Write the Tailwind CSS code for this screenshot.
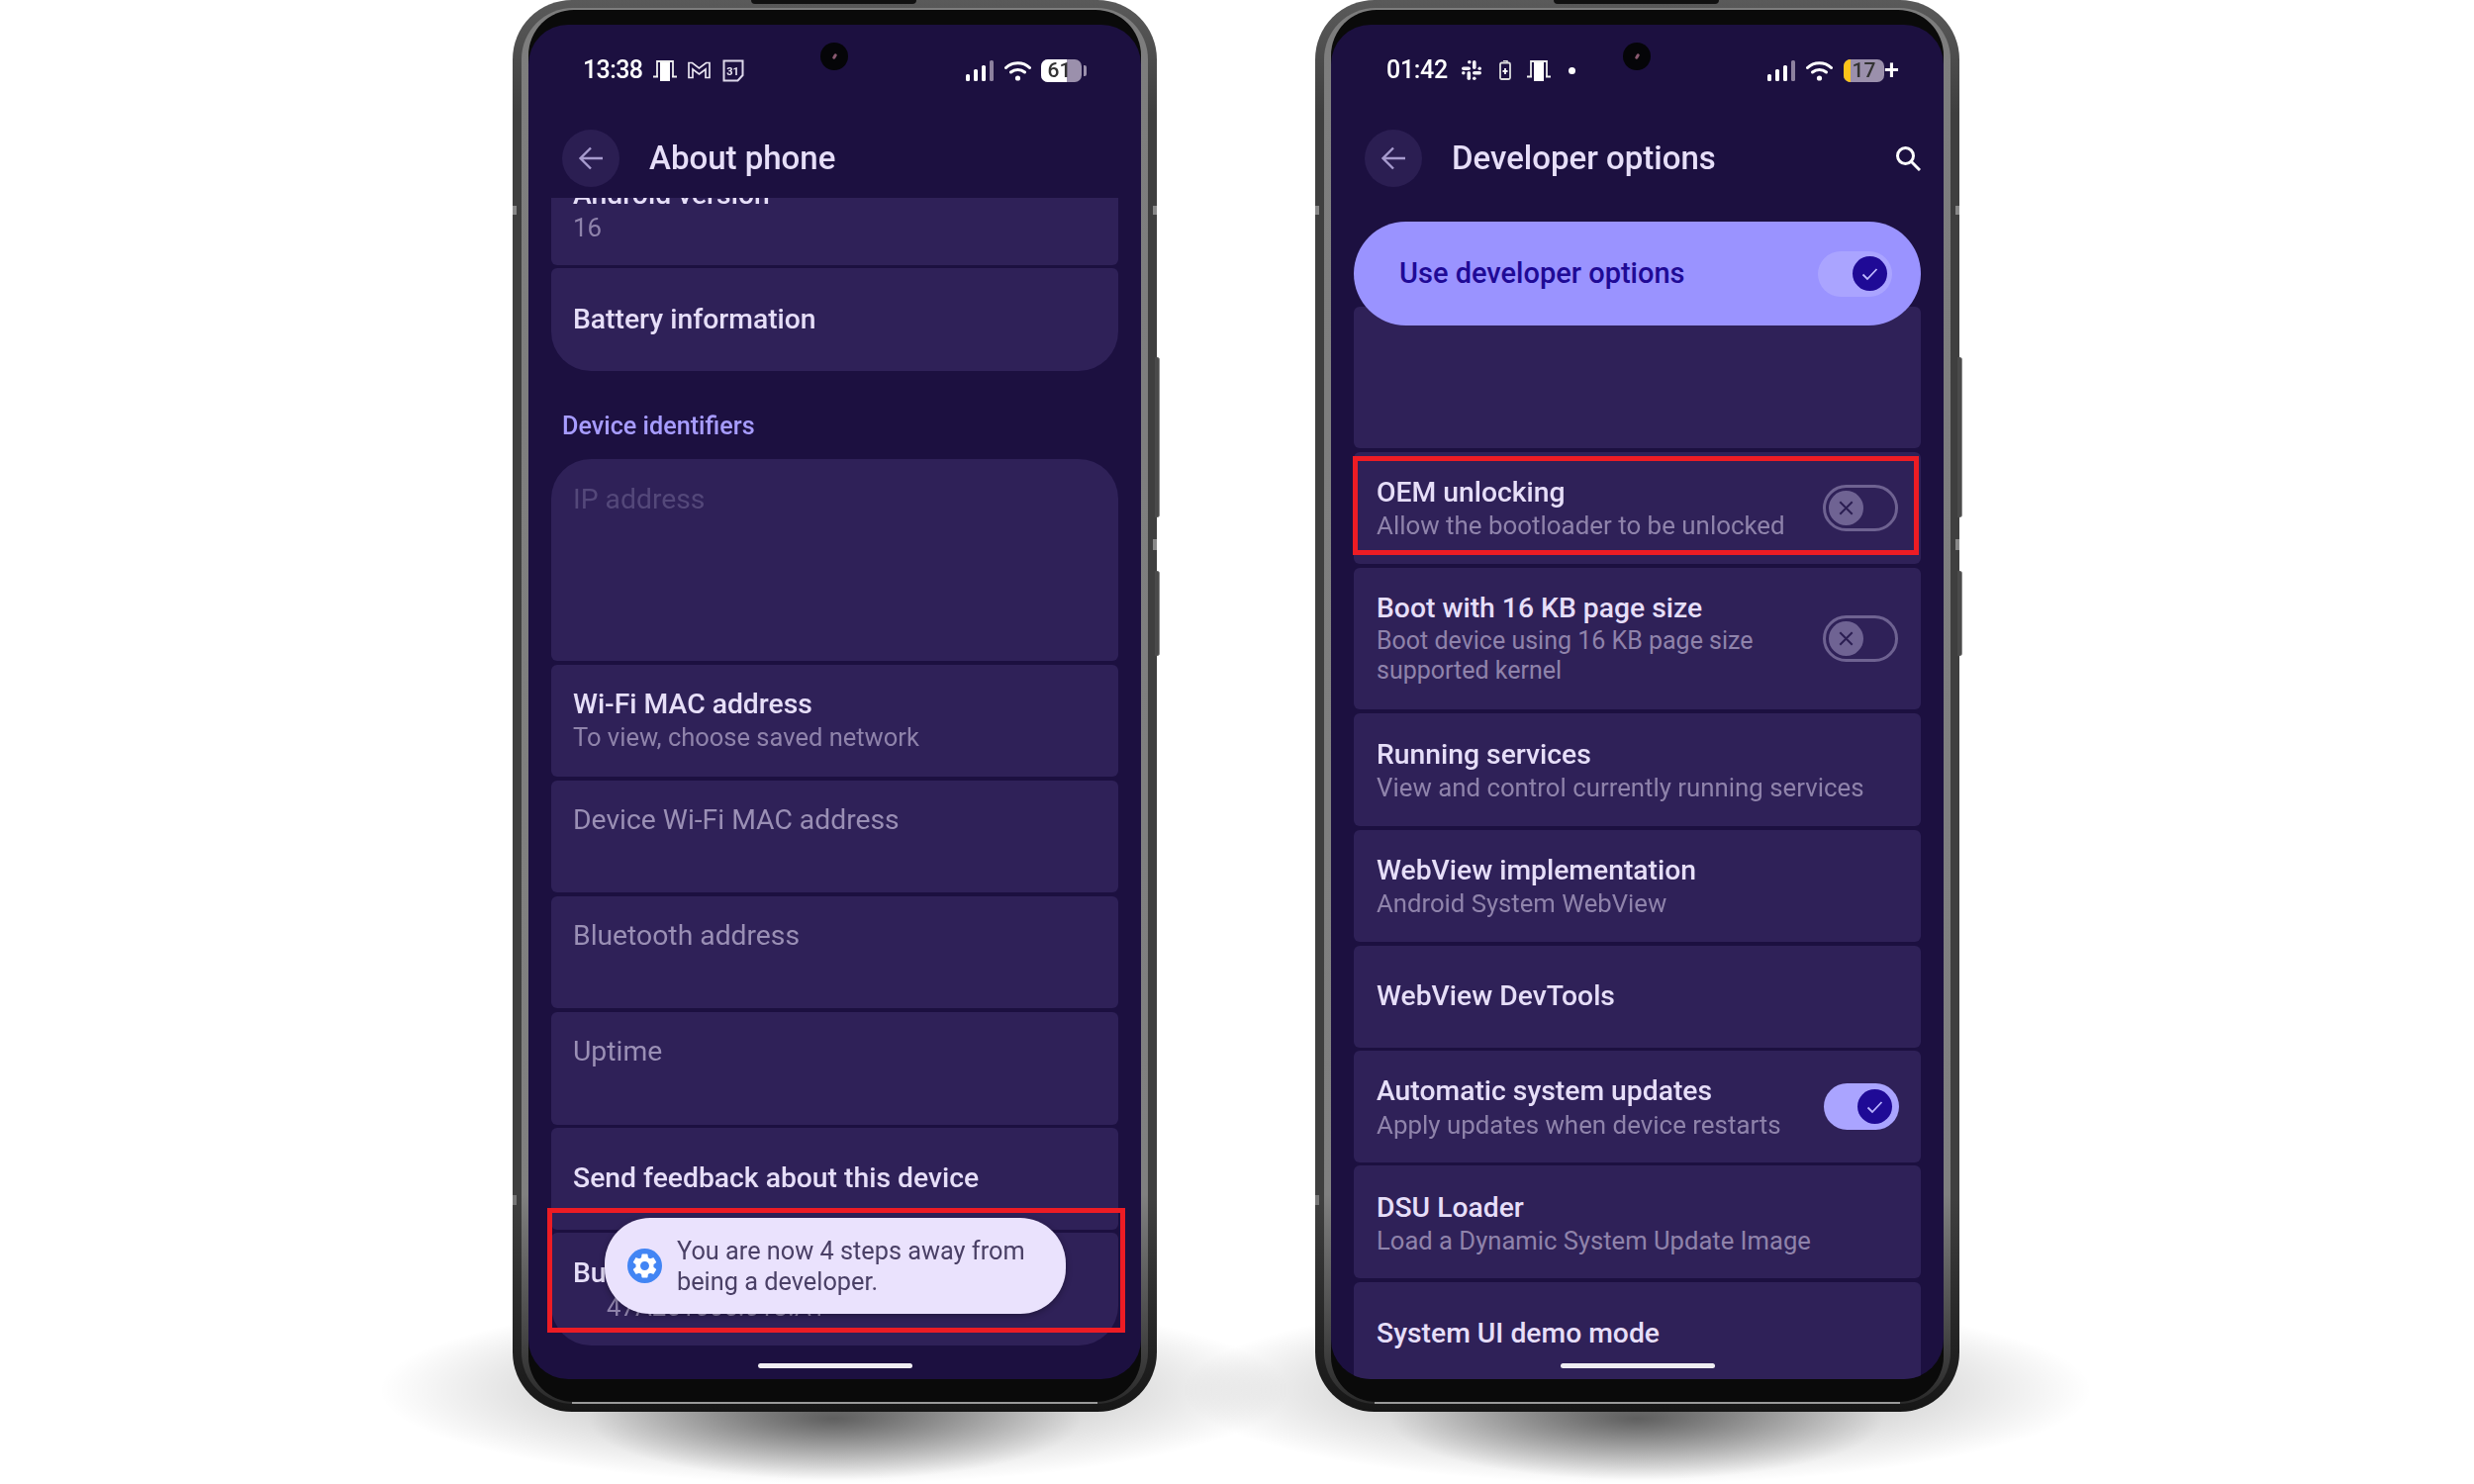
<!DOCTYPE html>
<html>
<head>
<meta charset="utf-8">
<script src="https://cdn.jsdelivr.net/npm/@tailwindcss/browser@4"></script>
</head>
<body class="bg-white">
<div class="relative w-[2500px] h-[1500px] overflow-hidden bg-white font-[family-name:Roboto,sans-serif]">
  <!-- shadows -->
  <div class="absolute left-[383px] top-[1310px] w-[920px] h-[190px] bg-[radial-gradient(closest-side,rgba(0,0,0,0.36),rgba(0,0,0,0))]"></div>
  <div class="absolute left-[593px] top-[1372px] w-[500px] h-[124px] bg-[radial-gradient(closest-side,rgba(0,0,0,0.5),rgba(0,0,0,0))]"></div>
  <div class="absolute left-[1194px] top-[1310px] w-[920px] h-[190px] bg-[radial-gradient(closest-side,rgba(0,0,0,0.36),rgba(0,0,0,0))]"></div>
  <div class="absolute left-[1404px] top-[1372px] w-[500px] h-[124px] bg-[radial-gradient(closest-side,rgba(0,0,0,0.5),rgba(0,0,0,0))]"></div>

  <div class="relative flex gap-[160px] pl-[518px] blur-[0.5px]">

    <!-- PHONE 1 -->
    <div class="relative w-[651px] h-[1427px] rounded-[60px] bg-[linear-gradient(#5a5a5a,#3f3f3f_8%,#3f3f3f_85%,#161616)] px-[9px] py-[8px] shrink-0">
      <div class="absolute right-[-3px] top-[361px] w-[5px] h-[162px] rounded-r-[3px] bg-[#4a4a4a] border-r border-[#888]"></div>
      <div class="absolute right-[-3px] top-[577px] w-[5px] h-[86px] rounded-r-[3px] bg-[#4a4a4a] border-r border-[#888]"></div>
      <div class="absolute right-0 top-[208px] w-[4px] h-[9px] bg-[#888]"></div>
      <div class="absolute right-0 top-[545px] w-[4px] h-[11px] bg-[#888]"></div>
      <div class="absolute left-0 top-[208px] w-[4px] h-[9px] bg-[#888]"></div>
      <div class="absolute left-0 top-[1208px] w-[4px] h-[10px] bg-[#777]"></div>
      <div class="absolute left-[241px] top-0 w-[167px] h-[4px] rounded-b-[4px] bg-[#111]"></div>
      <div class="h-[1411px] rounded-[52px] bg-[linear-gradient(#7d7d7d,#808080_85%,#2a2a2a)] px-[7px] py-[2px]">
        <div class="h-[1407px] rounded-[46px] bg-[#0a0a0a] pt-[15px]">
        <div class="relative h-[1369px] rounded-[40px] bg-[#1c1040] overflow-hidden">
          <div class="absolute left-[295px] top-[18px] w-[28px] h-[28px] rounded-full bg-[#050508] flex items-center justify-center">
            <div class="w-[3px] h-[6px] rotate-[30deg] rounded-full bg-[#8a5a70]"></div>
          </div>
          <!-- status -->
          <div class="h-[92px] flex items-center justify-between pl-[55px] pr-[55px] text-white">
            <div class="flex items-center">
              <span class="text-[25px] font-medium w-[71px] tracking-[-0.6px]">13:38</span>
              <svg class="w-[24px] h-[22px]" viewBox="0 0 24 22" fill="none"><path d="M4 18V2h16v16" stroke="#eee" stroke-width="1.8"/><rect x="7" y="3" width="10" height="19" fill="#fff"/><path d="M0 17.5h5M19 17.5h5" stroke="#eee" stroke-width="1.8"/></svg>
              <svg class="ml-[11px] w-[23px] h-[18px]" viewBox="0 0 23 18" fill="none"><path d="M1 1.5L4.500 1.500L11.500 7L18.500 1.500L22 1.500V16.500H18V8L11.500 13L5 8V16.500H1Z" stroke="#e8e4f0" stroke-width="1.7"/></svg>
              <svg class="ml-[12px] w-[22px] h-[23px]" viewBox="0 0 22 23" fill="none"><path d="M1.500 1.500H20.500V16L15.500 21.500H1.500Z" stroke="#ddd8ea" stroke-width="2"/><text x="10.500" y="15.500" text-anchor="middle" font-size="11" font-weight="700" fill="#e8e4f0" font-family="Roboto">31</text></svg>
            </div>
            <div class="flex items-center">
              <svg class="w-[28px] h-[21px]" viewBox="0 0 28 21"><rect x="0" y="14" width="4" height="7" rx="1.500" fill="#fff"/><rect x="8" y="9" width="4" height="12" rx="1.500" fill="#fff"/><rect x="16" y="5" width="4" height="16" rx="1.500" fill="#fff"/><rect x="24" y="0" width="4" height="21" rx="1.500" fill="#8d819f"/></svg>
              <svg class="ml-[11px] w-[27px] h-[21px]" viewBox="0 0 27 21" fill="none"><path d="M1.500 7.500C8 1 19 1 25.500 7.500" stroke="#fff" stroke-width="3" stroke-linecap="round"/><path d="M6.500 12C10.500 8.500 16.500 8.500 20.500 12" stroke="#fff" stroke-width="3" stroke-linecap="round"/><circle cx="13.500" cy="18" r="2.600" fill="#fff"/></svg>
              <div class="ml-[10px] relative w-[41px] h-[23px] rounded-[7px] overflow-hidden bg-[#9b90ac] flex items-center justify-center">
                <div class="absolute left-0 top-0 bottom-0 w-[26px] bg-white"></div>
                <span class="relative text-[21px] leading-none font-medium text-[#333] -ml-[4px]">61</span>
              </div>
              <div class="ml-[2px] w-[3px] h-[11px] rounded-r-[2px] bg-[#9b90ac]"></div>
            </div>
          </div>
          <!-- header -->
          <div class="h-[83px] pt-[3px] flex items-center pl-[34px]">
            <div class="w-[58px] h-[58px] rounded-full bg-[#2b1e52] flex items-center justify-center">
              <svg class="w-[26px] h-[26px]" viewBox="0 0 26 26" fill="none" stroke="#a79bce" stroke-width="2.400"><path d="M25 13H2.500M13 2.500L2.500 13L13 23.500"/></svg>
            </div>
            <span class="ml-[30px] text-[33px] font-medium text-[#e6def8]">About phone</span>
          </div>
          <!-- list -->
          <div class="flex flex-col px-[23px]">
            <div class="h-[68px] rounded-b-[6px] bg-[#2f2158] pl-[22px] overflow-hidden">
              <div class="-mt-[20px] text-[28.300px] leading-[34px] font-medium text-[#e6def8]">Android version</div>
              <div class="text-[25.800px] leading-[32px] text-[#8f83ab]">16</div>
            </div>
            <div class="mt-[3px] h-[104px] rounded-t-[6px] rounded-b-[40px] bg-[#2f2158] pl-[22px] flex items-center">
              <div class="text-[28.300px] leading-[32px] font-medium text-[#e6def8]">Battery information</div>
            </div>
            <div class="h-[89px] flex items-end pl-[11px] pb-[19px]">
              <span class="text-[25.200px] leading-[28px] font-medium text-[#a79cff]">Device identifiers</span>
            </div>
            <div class="h-[204px] rounded-t-[40px] rounded-b-[6px] bg-[#2f2158] pl-[22px] pt-[25px]">
              <div class="text-[28.300px] leading-[32px] text-[#54487a]">IP address</div>
            </div>
            <div class="mt-[4px] h-[113px] rounded-[6px] bg-[#2f2158] pl-[22px] pt-[24px]">
              <div class="text-[28.300px] leading-[32px] font-medium text-[#e6def8]">Wi-Fi MAC address</div>
              <div class="text-[25.500px] leading-[34px] text-[#8f83ab]">To view, choose saved network</div>
            </div>
            <div class="mt-[4px] h-[113px] rounded-[6px] bg-[#2f2158] pl-[22px] pt-[24px]">
              <div class="text-[28.300px] leading-[32px] text-[#9a8fb5]">Device Wi-Fi MAC address</div>
            </div>
            <div class="mt-[4px] h-[113px] rounded-[6px] bg-[#2f2158] pl-[22px] pt-[24px]">
              <div class="text-[28.300px] leading-[32px] text-[#9a8fb5]">Bluetooth address</div>
            </div>
            <div class="mt-[4px] h-[114px] rounded-[6px] bg-[#2f2158] pl-[22px] pt-[24px]">
              <div class="text-[28.300px] leading-[32px] text-[#9a8fb5]">Uptime</div>
            </div>
            <div class="mt-[3px] h-[103px] rounded-[6px] bg-[#2f2158] pl-[22px] pt-[35px]">
              <div class="text-[28.300px] leading-[32px] font-medium text-[#e6def8]">Send feedback about this device</div>
            </div>
            <div class="mt-[3px] h-[114px] rounded-t-[6px] rounded-b-[40px] bg-[#2f2158] pl-[22px] pt-[25px]">
              <div class="text-[28.300px] leading-[32px] font-medium text-[#e6def8]">Build number</div>
              <div class="pl-[34px] text-[25.800px] leading-[36px] text-[#8f83ab] whitespace-nowrap">47A251005.013.A1</div>
            </div>
          </div>
          <div class="absolute left-[232px] top-[1353px] w-[156px] h-[5px] rounded-full bg-[#efedf2]"></div>
          <!-- toast -->
          <div class="absolute left-[77px] top-[1206px] w-[466px] h-[97px] rounded-[46px] bg-[#eae2fd] shadow-[0_2px_6px_rgba(0,0,0,0.3)] flex items-center pl-[23px]">
            <svg class="w-[35px] h-[35px] shrink-0" viewBox="0 0 35 35"><circle cx="17.500" cy="17.500" r="17.500" fill="#4285f4"/><g transform="translate(2.500 2.500) scale(1.25)"><path fill="#fff" fill-rule="evenodd" d="M19.140 12.940c.04-.3.06-.61.06-.94 0-.32-.02-.64-.07-.94l2.030-1.580c.18-.14.23-.41.12-.61l-1.920-3.320c-.12-.22-.37-.29-.59-.22l-2.390.96c-.5-.38-1.030-.7-1.620-.94l-.36-2.540c-.04-.24-.24-.41-.48-.41h-3.840c-.24 0-.43.17-.47.41l-.36 2.540c-.59.24-1.130.57-1.620.94l-2.390-.96c-.22-.08-.47 0-.59.22L2.740 8.870c-.12.21-.08.47.12.61l2.030 1.580c-.05.3-.09.63-.09.94s.02.64.07.94l-2.030 1.580c-.18.14-.23.41-.12.61l1.920 3.320c.12.22.37.29.59.22l2.390-.96c.5.38 1.030.7 1.620.94l.36 2.540c.05.24.24.41.48.41h3.840c.24 0 .44-.17.47-.41l.36-2.540c.59-.24 1.130-.56 1.620-.94l2.390.96c.22.08.47 0 .59-.22l1.920-3.320c.12-.22.07-.47-.12-.61l-2.010-1.580zM12 15.600c-1.980 0-3.600-1.620-3.600-3.600s1.620-3.600 3.600-3.600 3.600 1.620 3.600 3.600-1.620 3.600-3.600 3.600z"/></g></svg>
            <div class="ml-[15px] text-[25.300px] leading-[31px] text-[#4a4066]">You are now 4 steps away from<br>being a developer.</div>
          </div>
          <!-- highlight -->
          <div class="absolute left-[19px] top-[1196px] w-[584px] h-[126px] border-[5px] border-[#ed1c24]"></div>
        </div>
        </div>
      </div>
      <div class="absolute bottom-[8px] left-[60px] right-[60px] h-[2px] bg-[#999]"></div>
    </div>

    <!-- PHONE 2 -->
    <div class="relative w-[651px] h-[1427px] rounded-[60px] bg-[linear-gradient(#5a5a5a,#3f3f3f_8%,#3f3f3f_85%,#161616)] px-[9px] py-[8px] shrink-0">
      <div class="absolute right-[-3px] top-[361px] w-[5px] h-[162px] rounded-r-[3px] bg-[#4a4a4a] border-r border-[#888]"></div>
      <div class="absolute right-[-3px] top-[577px] w-[5px] h-[86px] rounded-r-[3px] bg-[#4a4a4a] border-r border-[#888]"></div>
      <div class="absolute right-0 top-[208px] w-[4px] h-[9px] bg-[#888]"></div>
      <div class="absolute right-0 top-[545px] w-[4px] h-[11px] bg-[#888]"></div>
      <div class="absolute left-0 top-[208px] w-[4px] h-[9px] bg-[#888]"></div>
      <div class="absolute left-0 top-[1208px] w-[4px] h-[10px] bg-[#777]"></div>
      <div class="absolute left-[241px] top-0 w-[167px] h-[4px] rounded-b-[4px] bg-[#111]"></div>
      <div class="h-[1411px] rounded-[52px] bg-[linear-gradient(#7d7d7d,#808080_85%,#2a2a2a)] px-[7px] py-[2px]">
        <div class="h-[1407px] rounded-[46px] bg-[#0a0a0a] pt-[15px]">
        <div class="relative h-[1369px] rounded-[40px] bg-[#1c1040] overflow-hidden">
          <div class="absolute left-[295px] top-[18px] w-[28px] h-[28px] rounded-full bg-[#050508] flex items-center justify-center">
            <div class="w-[3px] h-[6px] rotate-[30deg] rounded-full bg-[#8a5a70]"></div>
          </div>
          <!-- status -->
          <div class="h-[92px] flex items-center justify-between pl-[56px] pr-[45px] text-white">
            <div class="flex items-center">
              <span class="text-[25px] font-medium w-[76px] tracking-[-0.3px]">01:42</span>
              <svg class="w-[20px] h-[20px]" viewBox="0 0 20 20" fill="#f0eef4"><rect x="0" y="6.500" width="9" height="3.600" rx="1.800"/><rect x="6" y="0" width="3.600" height="3.600" rx="1.800"/><rect x="11" y="0" width="3.600" height="9" rx="1.800"/><rect x="16.400" y="6.500" width="3.600" height="3.600" rx="1.800"/><rect x="11" y="11" width="9" height="3.600" rx="1.800"/><rect x="11" y="16.400" width="3.600" height="3.600" rx="1.800"/><rect x="5.500" y="11" width="3.600" height="9" rx="1.800"/><rect x="0" y="11" width="3.600" height="3.600" rx="1.800"/></svg>
              <svg class="ml-[18px] w-[12px] h-[20px]" viewBox="0 0 12 20" fill="none"><path d="M4 0.500h4v2" stroke="#ddd" stroke-width="1.500"/><rect x="1" y="2.500" width="10" height="16.500" rx="1.500" stroke="#ddd" stroke-width="1.800"/><path d="M6 8v6M3.500 11h5" stroke="#fff" stroke-width="1.800"/></svg>
              <svg class="ml-[16px] w-[24px] h-[22px]" viewBox="0 0 24 22" fill="none"><path d="M4 18V2h16v16" stroke="#eee" stroke-width="1.800"/><rect x="7" y="3" width="10" height="19" fill="#fff"/><path d="M0 17.500h5M19 17.500h5" stroke="#eee" stroke-width="1.800"/></svg>
              <div class="ml-[18px] w-[7px] h-[7px] rounded-full bg-white"></div>
            </div>
            <div class="flex items-center">
              <svg class="w-[28px] h-[21px]" viewBox="0 0 28 21"><rect x="0" y="14" width="4" height="7" rx="1.500" fill="#fff"/><rect x="8" y="9" width="4" height="12" rx="1.500" fill="#fff"/><rect x="16" y="5" width="4" height="16" rx="1.500" fill="#fff"/><rect x="24" y="0" width="4" height="21" rx="1.500" fill="#8d819f"/></svg>
              <svg class="ml-[11px] w-[27px] h-[21px]" viewBox="0 0 27 21" fill="none"><path d="M1.500 7.500C8 1 19 1 25.500 7.500" stroke="#fff" stroke-width="3" stroke-linecap="round"/><path d="M6.500 12C10.500 8.500 16.500 8.500 20.500 12" stroke="#fff" stroke-width="3" stroke-linecap="round"/><circle cx="13.500" cy="18" r="2.600" fill="#fff"/></svg>
              <div class="ml-[11px] relative w-[41px] h-[23px] rounded-[7px] overflow-hidden bg-[#9b90ac] flex items-center justify-center">
                <div class="absolute left-0 top-0 bottom-0 w-[7px] bg-[#fcc419]"></div>
                <span class="relative text-[21px] leading-none font-medium text-[#333]">17</span>
              </div>
              <span class="text-[27px] leading-none font-medium text-white">+</span>
            </div>
          </div>
          <!-- header -->
          <div class="h-[83px] pt-[3px] flex items-center pl-[34px] pr-[23px]">
            <div class="w-[58px] h-[58px] rounded-full bg-[#2b1e52] flex items-center justify-center">
              <svg class="w-[26px] h-[26px]" viewBox="0 0 26 26" fill="none" stroke="#a79bce" stroke-width="2.400"><path d="M25 13H2.500M13 2.500L2.500 13L13 23.500"/></svg>
            </div>
            <span class="ml-[30px] text-[33px] font-medium text-[#e6def8]">Developer options</span>
            <svg class="ml-auto w-[26px] h-[26px]" viewBox="0 0 26 26" fill="none" stroke="#fff" stroke-width="3"><circle cx="10.500" cy="10.500" r="8"/><path d="M16.500 16.500L25 25"/></svg>
          </div>
          <!-- list -->
          <div class="relative flex flex-col px-[23px]">
            <div class="mt-[110px] h-[143px] rounded-[6px] bg-[#2f2158]"></div>
            <div class="mt-[4px] h-[113px] rounded-[6px] bg-[#2f2158] pl-[23px] pr-[23px] flex items-center justify-between">
              <div class="pt-[3px]">
                <div class="text-[28.300px] leading-[32px] font-medium text-[#e6def8]">OEM unlocking</div>
                <div class="text-[25.900px] leading-[35px] text-[#8f83ab]">Allow the bootloader to be unlocked</div>
              </div>
              <div class="w-[76px] h-[47px] rounded-full border-[3px] border-[#6e6291] pl-[3px] flex items-center">
                <div class="w-[35px] h-[35px] rounded-full bg-[#6f6393] flex items-center justify-center">
                  <svg class="w-[17px] h-[17px]" viewBox="0 0 15 15" stroke="#2b1e52" stroke-width="1.800"><path d="M2 2L13 13M13 2L2 13"/></svg>
                </div>
              </div>
            </div>
            <div class="mt-[4px] h-[143px] rounded-[6px] bg-[#2f2158] pl-[23px] pr-[23px] flex items-center justify-between">
              <div>
                <div class="text-[28.300px] leading-[32px] font-medium text-[#e6def8]">Boot with 16 KB page size</div>
                <div class="text-[25px] leading-[30px] mt-[2px] text-[#8f83ab]">Boot device using 16 KB page size<br>supported kernel</div>
              </div>
              <div class="w-[76px] h-[47px] rounded-full border-[3px] border-[#6e6291] pl-[3px] flex items-center">
                <div class="w-[35px] h-[35px] rounded-full bg-[#6f6393] flex items-center justify-center">
                  <svg class="w-[17px] h-[17px]" viewBox="0 0 15 15" stroke="#2b1e52" stroke-width="1.800"><path d="M2 2L13 13M13 2L2 13"/></svg>
                </div>
              </div>
            </div>
            <div class="mt-[4px] h-[114px] rounded-[6px] bg-[#2f2158] pl-[23px] pt-[26px]">
              <div class="text-[28.300px] leading-[32px] font-medium text-[#e6def8]">Running services</div>
              <div class="text-[25.800px] leading-[34px] text-[#8f83ab]">View and control currently running services</div>
            </div>
            <div class="mt-[4px] h-[113px] rounded-[6px] bg-[#2f2158] pl-[23px] pt-[25px]">
              <div class="text-[28.300px] leading-[32px] font-medium text-[#e6def8]">WebView implementation</div>
              <div class="text-[25.700px] leading-[34px] text-[#8f83ab]">Android System WebView</div>
            </div>
            <div class="mt-[4px] h-[103px] rounded-[6px] bg-[#2f2158] pl-[23px] pb-[2px] flex items-center">
              <div class="text-[28.300px] leading-[32px] font-medium text-[#e6def8]">WebView DevTools</div>
            </div>
            <div class="mt-[3px] h-[113px] rounded-[6px] bg-[#2f2158] pl-[23px] pr-[22px] flex items-center justify-between">
              <div class="pt-[5px]">
                <div class="text-[28.300px] leading-[32px] font-medium text-[#e6def8]">Automatic system updates</div>
                <div class="text-[25.900px] leading-[36px] text-[#8f83ab]">Apply updates when device restarts</div>
              </div>
              <div class="w-[76px] h-[47px] rounded-full bg-[#aaa4ff] pr-[7px] flex items-center justify-end">
                <div class="w-[35px] h-[35px] rounded-full bg-[#1f0a96] flex items-center justify-center">
                  <svg class="w-[17px] h-[14px]" viewBox="0 0 17 14" fill="none" stroke="#b9b3ff" stroke-width="1.800"><path d="M1.500 7.500L6 12L15.500 2"/></svg>
                </div>
              </div>
            </div>
            <div class="mt-[3px] h-[114px] rounded-[6px] bg-[#2f2158] pl-[23px] pt-[27px]">
              <div class="text-[28.300px] leading-[32px] font-medium text-[#e6def8]">DSU Loader</div>
              <div class="text-[25.600px] leading-[34px] text-[#8f83ab]">Load a Dynamic System Update Image</div>
            </div>
            <div class="mt-[4px] h-[120px] rounded-[6px] bg-[#2f2158] pl-[23px] pt-[36px]">
              <div class="text-[28.300px] leading-[32px] font-medium text-[#e6def8]">System UI demo mode</div>
            </div>
            <!-- master switch -->
            <div class="absolute left-[23px] right-[23px] top-[24px] h-[105px] rounded-full bg-[#9a93ff] pl-[46px] pr-[29px] flex items-center justify-between">
              <span class="text-[29px] font-medium text-[#1f0a96]">Use developer options</span>
              <div class="w-[75px] h-[46px] rounded-full bg-[#aaa4ff] pr-[5px] flex items-center justify-end">
                <div class="w-[35px] h-[35px] rounded-full bg-[#1f0a96] flex items-center justify-center">
                  <svg class="w-[17px] h-[14px]" viewBox="0 0 17 14" fill="none" stroke="#c0baff" stroke-width="1.800"><path d="M1.500 7.500L6 12L15.500 2"/></svg>
                </div>
              </div>
            </div>
          </div>
          <div class="absolute left-[232px] top-[1353px] w-[156px] h-[5px] rounded-full bg-[#efedf2]"></div>
          <div class="absolute left-[22px] top-[436px] w-[572px] h-[100px] border-[5px] border-[#ed1c24]"></div>
        </div>
        </div>
      </div>
      <div class="absolute bottom-[8px] left-[60px] right-[60px] h-[2px] bg-[#999]"></div>
    </div>

  </div>
</div>
</body>
</html>
